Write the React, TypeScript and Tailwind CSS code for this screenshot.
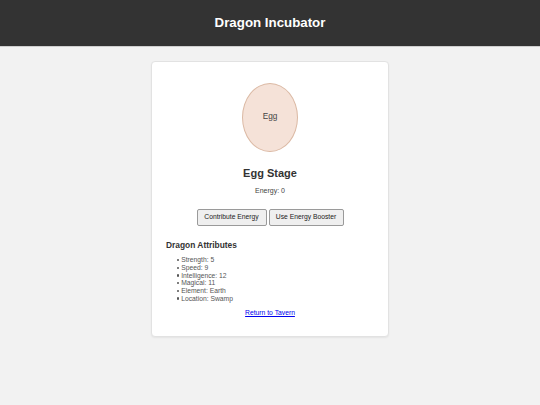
import React from "react";

export default function App() {
  const attrs = [
    "Strength: 5",
    "Speed: 9",
    "Intelligence: 12",
    "Magical: 11",
    "Element: Earth",
    "Location: Swamp",
  ];
  return (
    <div
      className="min-h-[405px] w-full bg-[#f2f2f2]"
      style={{ fontFamily: '"Liberation Sans", Arial, sans-serif' }}
    >
      <header className="flex h-[47px] items-center justify-center border-b border-[#cfcfcf] bg-[#333333]">
        <h1 className="text-[13.3px] font-bold leading-none text-white">Dragon Incubator</h1>
      </header>
      <main className="flex justify-center pt-[14px]">
        <div className="flex w-[238px] flex-col rounded-[4px] border border-[#e2e2e2] bg-white px-[14px] pb-[19px] pt-[21px] shadow-[0_1px_2px_rgba(0,0,0,0.06)]">
          <div className="flex justify-center">
            <div className="flex h-[69px] w-[56px] items-center justify-center rounded-[50%] border border-[#dbb9a4] bg-[#f5e2d8]">
              <span className="text-[8.25px] leading-none text-[#444]">Egg</span>
            </div>
          </div>
          <h2 className="mt-[15px] text-center text-[11px] font-bold leading-[13px] text-[#333]">Egg Stage</h2>
          <p className="mt-[6.5px] text-center text-[7px] leading-[8px] text-[#444]">Energy: 0</p>
          <div className="mt-[14px] flex justify-center gap-[2px]">
            <button className="h-[17px] w-[70px] rounded-[2px] border border-[#9a9a9a] bg-[#efefef] text-[6.75px] leading-none text-[#222]">
              Contribute Energy
            </button>
            <button className="h-[17px] w-[75px] rounded-[2px] border border-[#9a9a9a] bg-[#efefef] text-[6.75px] leading-none text-[#222]">
              Use Energy Booster
            </button>
          </div>
          <h3 className="mt-[14px] text-[8.4px] font-bold leading-[10px] text-[#333]">Dragon Attributes</h3>
          <ul className="mt-[6.85px] text-[6.75px] leading-[7.67px] text-[#555]">
            {attrs.map((a) => (
              <li key={a} className="flex items-center">
                <span className="ml-[10.5px] mr-[2.5px] h-[2.2px] w-[2.2px] rounded-full bg-[#555]" />
                <span>{a}</span>
              </li>
            ))}
          </ul>
          <div className="mt-[4px] text-center leading-[8px]">
            <a href="#" className="text-[6.75px] text-[#0000ee] underline">
              Return to Tavern
            </a>
          </div>
        </div>
      </main>
    </div>
  );
}
